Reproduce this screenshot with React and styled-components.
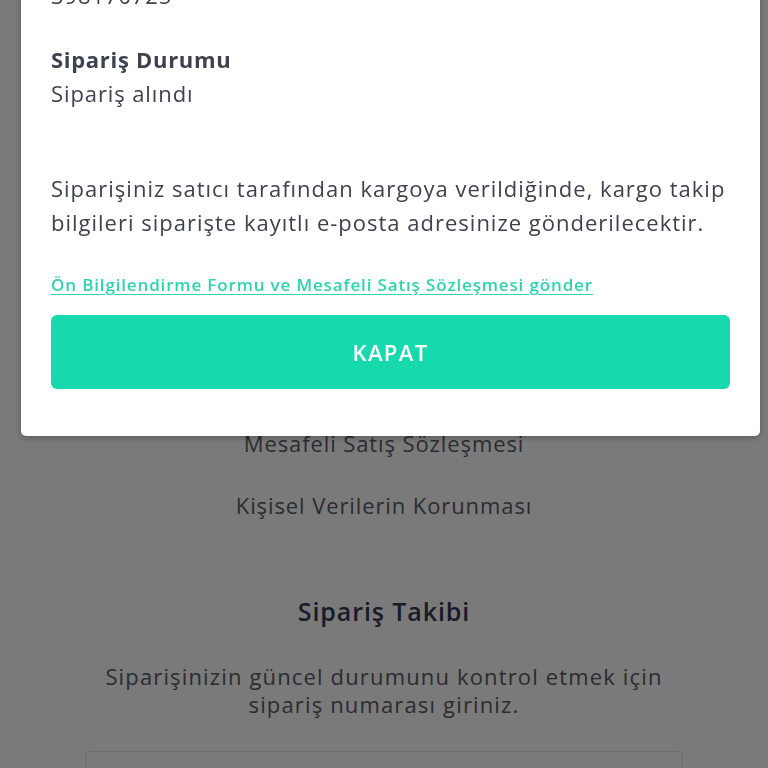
import React from "react";
import styled, { createGlobalStyle } from "styled-components";

const FONT = `"Open Sans", "Noto Sans", "Liberation Sans", sans-serif`;

const Global = createGlobalStyle`
  html, body {
    margin: 0;
    padding: 0;
    background: #ffffff;
    font-family: ${FONT};
    -webkit-font-smoothing: antialiased;
  }
  * { box-sizing: border-box; }
`;

/* ---------- page underneath ---------- */

const Page = styled.main`
  min-height: 768px;
  padding-top: 226px;
  display: flex;
  flex-direction: column;
  align-items: center;
  color: #5f626b;
`;

const FooterLinks = styled.nav`
  display: flex;
  flex-direction: column;
  align-items: center;
`;

const FooterLink = styled.a`
  height: 62px;
  display: flex;
  align-items: center;
  font-size: 22px;
  letter-spacing: 0.9px;
  color: #5a5d66;
  text-decoration: none;
`;

const TrackSection = styled.section`
  margin-top: 59px;
  display: flex;
  flex-direction: column;
  align-items: center;
  width: 100%;
`;

const TrackTitle = styled.h2`
  margin: 0;
  font-size: 25px;
  line-height: 32px;
  font-weight: 600;
  letter-spacing: 0.9px;
  color: #333956;
`;

const TrackText = styled.p`
  margin: 35px 0 0;
  font-size: 22px;
  line-height: 28px;
  letter-spacing: 1.15px;
  text-align: center;
  color: #5a5d66;
`;

const TrackInput = styled.div`
  margin-top: 33px;
  width: 598px;
  height: 56px;
  border: 1px solid #e3e3e3;
  border-radius: 4px;
  background: #fff;
`;

/* ---------- modal ---------- */

const Overlay = styled.div`
  position: fixed;
  inset: 0;
  background: rgba(0, 0, 0, 0.52);
  overflow: hidden;
`;

const Modal = styled.div`
  margin: -87px 0 0 21px;
  width: 739px;
  background: #ffffff;
  border-radius: 5px;
  box-shadow: 0 2px 6px rgba(0, 0, 0, 0.25);
  padding: 31px 30px 47px;
  display: flex;
  flex-direction: column;
`;

const Field = styled.div`
  display: flex;
  flex-direction: column;
  & + & { margin-top: 30px; }
`;

const FieldLabel = styled.div`
  font-size: 22px;
  line-height: 34px;
  font-weight: 700;
  letter-spacing: 0.7px;
  color: #3e424e;
`;

const FieldValue = styled.div`
  font-size: 22px;
  line-height: 34px;
  letter-spacing: 0.9px;
  color: #3e424e;
`;

const Notice = styled.p`
  margin: 61px 0 0;
  font-size: 22px;
  line-height: 34px;
  letter-spacing: 1px;
  color: #3e424e;
`;

const SendLink = styled.a`
  margin-top: 34px;
  font-size: 17px;
  line-height: 24px;
  font-weight: 600;
  letter-spacing: 0.85px;
  color: #2fd3ae;
  text-decoration: underline;
  text-underline-offset: 3px;
  cursor: pointer;
`;

const CloseButton = styled.button`
  margin-top: 18px;
  height: 74px;
  width: 100%;
  border: none;
  border-radius: 6px;
  background: #17d9ae;
  color: #ffffff;
  font-family: ${FONT};
  font-size: 22px;
  font-weight: 600;
  letter-spacing: 1.4px;
  cursor: pointer;
`;

export default function App() {
  return (
    <>
      <Global />
      <Page>
        <FooterLinks>
          <FooterLink>Hakkımızda</FooterLink>
          <FooterLink>İade ve Değişim</FooterLink>
          <FooterLink>Ön Bilgilendirme Formu</FooterLink>
          <FooterLink>Mesafeli Satış Sözleşmesi</FooterLink>
          <FooterLink>Kişisel Verilerin Korunması</FooterLink>
        </FooterLinks>
        <TrackSection>
          <TrackTitle>Sipariş Takibi</TrackTitle>
          <TrackText>
            Siparişinizin güncel durumunu kontrol etmek için
            <br />
            sipariş numarası giriniz.
          </TrackText>
          <TrackInput />
        </TrackSection>
      </Page>
      <Overlay>
        <Modal>
          <Field>
            <FieldLabel>Sipariş Numarası</FieldLabel>
            <FieldValue>398170725</FieldValue>
          </Field>
          <Field>
            <FieldLabel>Sipariş Durumu</FieldLabel>
            <FieldValue>Sipariş alındı</FieldValue>
          </Field>
          <Notice>
            Siparişiniz satıcı tarafından kargoya verildiğinde, kargo takip
            bilgileri siparişte kayıtlı e-posta adresinize gönderilecektir.
          </Notice>
          <SendLink>Ön Bilgilendirme Formu ve Mesafeli Satış Sözleşmesi gönder</SendLink>
          <CloseButton>KAPAT</CloseButton>
        </Modal>
      </Overlay>
    </>
  );
}
